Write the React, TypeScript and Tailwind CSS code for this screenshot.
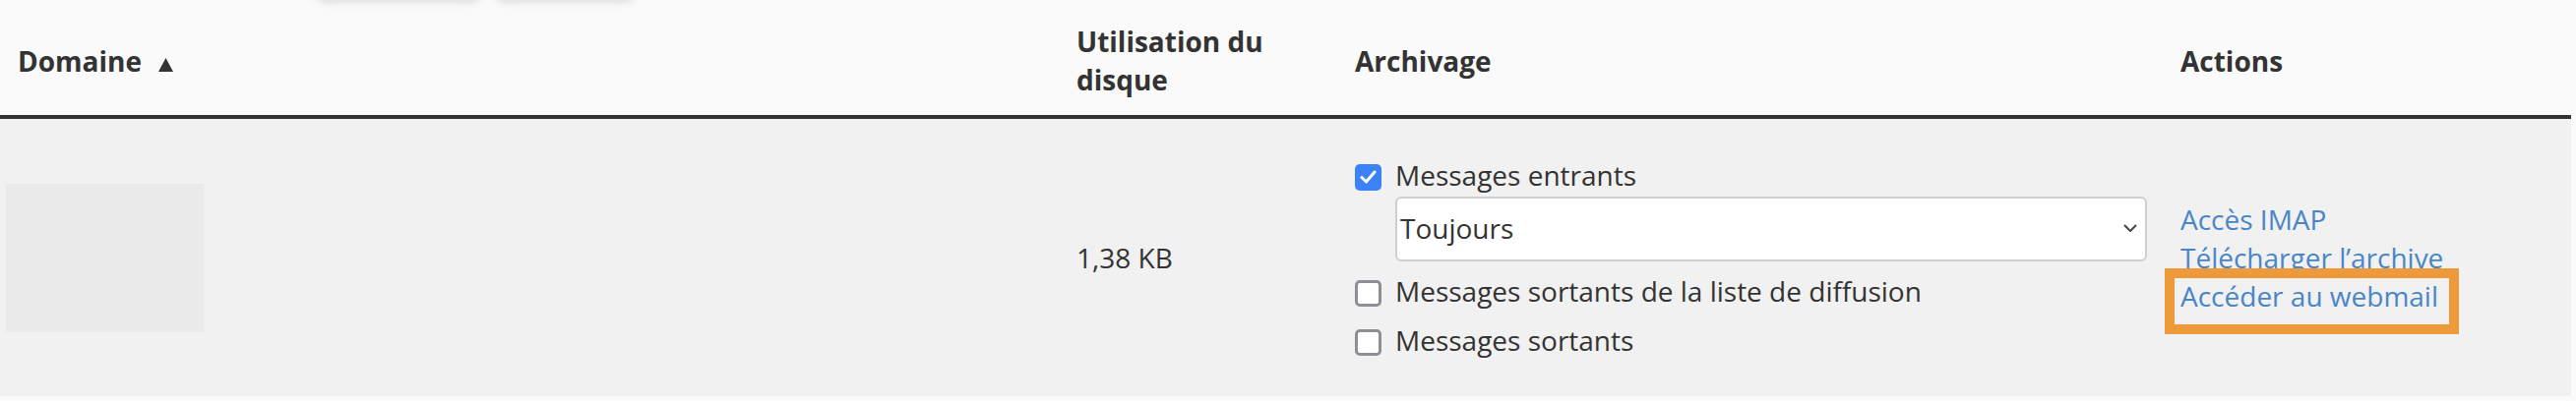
function Checkbox({ checked }: { checked?: boolean }) {
  if (checked) {
    return (
      <span className="mt-[8px] flex h-[27px] w-[27px] shrink-0 items-center justify-center rounded-[5px] bg-[#3b82f6]">
        <svg width="17" height="14" viewBox="0 0 17 14" fill="none">
          <path d="M2 7.5l4.5 4.5L15 2" stroke="white" strokeWidth="3" strokeLinecap="round" strokeLinejoin="round" />
        </svg>
      </span>
    );
  }
  return <span className="mt-[8px] block h-[27px] w-[27px] shrink-0 rounded-[5px] border-[3px] border-[#8e8e97] bg-white" />;
}

export default function App() {
  const cols = "grid grid-cols-[1076px_283px_839px_415px]";

  return (
    <div className="relative min-h-[408px] w-[2618px] overflow-hidden bg-[#fafafa] font-['Open_Sans',sans-serif] text-[28px] leading-[1.4] text-[#333]">
      {/* bottoms of the toolbar buttons above, cut off by the frame */}
      <div className="absolute left-[320px] top-[-42px] flex gap-[12px]">
        <div className="h-[41px] w-[170px] rounded-[10px] bg-[#fafafa] shadow-[0_3px_8px_rgba(0,0,0,0.13)]" />
        <div className="h-[41px] w-[143px] rounded-[10px] bg-[#fafafa] shadow-[0_3px_8px_rgba(0,0,0,0.13)]" />
      </div>

      <div className="w-[2613px]">
        {/* Header */}
        <div className={`${cols} items-center border-b-4 border-[#333] pt-[23px] pb-[16px] font-bold`}>
          <div className="pl-[18px]">
            Domaine
            <svg className="ml-[17px] inline-block align-baseline" width="15" height="14" viewBox="0 0 15 14">
              <polygon points="7.5,0 15,14 0,14" fill="#333" />
            </svg>
          </div>
          <div className="pl-[18px] pr-[10px]">Utilisation du disque</div>
          <div className="pl-[18px]">Archivage</div>
          <div className="pl-[18px]">Actions</div>
        </div>

        {/* Row */}
        <div className={`${cols} h-[282px] items-center bg-[#f1f1f1]`}>
          <div className="pl-[6px]">
            <div className="h-[151px] w-[201px] bg-[#eaeaea]" />
          </div>

          <div className="pl-[18px]">1,38 KB</div>

          <div className="flex flex-col pl-[18px]">
            <label className="flex items-start gap-[14px]">
              <Checkbox checked />
              <span>Messages entrants</span>
            </label>
            <div className="ml-[41px] mt-[2px] flex h-[66px] w-[764px] items-center justify-between rounded-[6px] border-2 border-[#cfcfcf] bg-white pl-[3px] pr-[8px]">
              <span>Toujours</span>
              <svg width="14" height="9" viewBox="0 0 14 9" fill="none">
                <path d="M1.5 1.5l5.5 5.5 5.5-5.5" stroke="#444" strokeWidth="2" strokeLinecap="round" strokeLinejoin="round" />
              </svg>
            </div>
            <label className="mt-[11px] flex items-start gap-[14px]">
              <Checkbox />
              <span>Messages sortants de la liste de diffusion</span>
            </label>
            <label className="mt-[11px] flex items-start gap-[14px]">
              <Checkbox />
              <span>Messages sortants</span>
            </label>
          </div>

          <div className="flex flex-col items-start pl-[18px] text-[#4a86c7]">
            <a className="block">Accès IMAP</a>
            <a className="block">Télécharger l’archive</a>
            <div className="relative">
              <a className="block">Accéder au webmail</a>
              <div className="pointer-events-none absolute -left-[16px] -top-[9px] h-[67px] w-[299px] border-[10px] border-[#ef9a3a]" />
            </div>
          </div>
        </div>
      </div>
    </div>
  );
}
